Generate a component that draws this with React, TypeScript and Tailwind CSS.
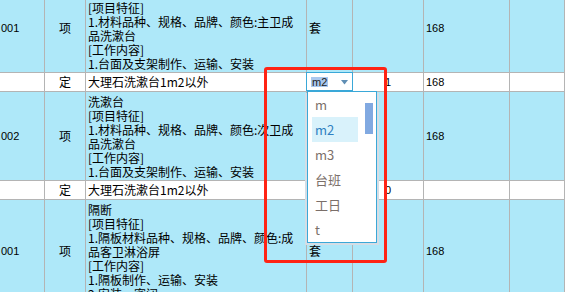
import React from 'react';

type Row = {
  kind: 'item' | 'quota';
  code?: string;
  type: string;
  lines: string[];
  unit?: string;
  qty?: string;
  price?: string;
  combo?: boolean;
};

const rows: Row[] = [
  {
    kind: 'item',
    code: '001',
    type: '项',
    lines: ['洗漱台', '[项目特征]', '1.材料品种、规格、品牌、颜色:主卫成', '品洗漱台', '[工作内容]', '1.台面及支架制作、运输、安装'],
    unit: '套',
    price: '168',
  },
  { kind: 'quota', type: '定', lines: ['大理石洗漱台1m2以外'], qty: '1', price: '168', combo: true },
  {
    kind: 'item',
    code: '002',
    type: '项',
    lines: ['洗漱台', '[项目特征]', '1.材料品种、规格、品牌、颜色:次卫成', '品洗漱台', '[工作内容]', '1.台面及支架制作、运输、安装'],
    unit: '套',
    price: '168',
  },
  { kind: 'quota', type: '定', lines: ['大理石洗漱台1m2以外'], qty: '0' },
  {
    kind: 'item',
    code: '001',
    type: '项',
    lines: ['隔断', '[项目特征]', '1.隔板材料品种、规格、品牌、颜色:成', '品客卫淋浴屏', '[工作内容]', '1.隔板制作、运输、安装', '2.安装、密闭'],
    unit: '套',
    price: '168',
  },
];

const units = ['m', 'm2', 'm3', '台班', '工日', 't'];

const cell = 'border-r border-b border-[#b4b4b4] flex items-center';
const num = "font-['Liberation_Sans',sans-serif] text-[11px]";

/* ── Unit combo with open list ─────────────────────────── */
function UnitCombo() {
  return (
    <>
      <div className="absolute -left-px -top-px z-20 flex h-[19px] w-[47px] items-center border border-[#3aa8d8] bg-white">
        <span className={`ml-[4px] mt-[1px] bg-[#a9c8ef] px-px leading-[10px] text-[#222] ${num}`}>m2</span>
        <svg className="ml-[13px] mt-[1px]" width="7" height="5" viewBox="0 0 7 5">
          <path d="M0 0 H7 L3.5 4.5 Z" fill="#5f8eb4" />
        </svg>
      </div>
      <div className="absolute left-0 top-[18px] z-10 h-[152px] w-[70px] border border-[#3aa8d8] bg-white shadow-[2px_2px_0_0_#d5dde5,-2px_2px_0_0_#d5dde5]">
        {units.map((u) =>
          u === 'm2' ? (
            <div key={u} className="ml-[4px] flex h-[25px] w-[46px] items-center bg-[#d9f2fb] pl-[3px] text-[13px] text-[#2f7fc1]">
              {u}
            </div>
          ) : (
            <div key={u} className="ml-[4px] flex h-[25px] items-center pl-[3px] text-[13px] text-[#7b6f69]">
              {u}
            </div>
          ),
        )}
        <div className="absolute left-[57px] top-[11px] h-[31px] w-[8px] bg-[#81a9e1]" />
      </div>
    </>
  );
}

function TableRow({ row }: { row: Row }) {
  const bg = row.kind === 'item' ? 'bg-[#aee8f9]' : 'bg-white';
  const isQuota = row.kind === 'quota';
  return (
    <div className={`grid grid-cols-[45px_41px_221px_46px_71px_86px_1fr] ${bg} ${isQuota ? 'h-[19px]' : ''}`}>
      <div className={`${cell} pl-px ${num}`}>{row.code}</div>
      <div className={`${cell} justify-center`}>{row.type}</div>
      <div className={`border-r border-b border-[#b4b4b4] pl-[2px] overflow-hidden ${isQuota ? 'flex items-center' : 'pt-[3px] pb-[1px]'}`}>
        {row.lines.map((l, i) => (
          <div key={i} className="whitespace-nowrap leading-[14px]">
            {l}
          </div>
        ))}
      </div>
      <div className={`${cell} relative pl-[2px]`}>
        {row.unit}
        {row.combo && <UnitCombo />}
      </div>
      <div className={`${cell} justify-center ${num}`}>{row.qty}</div>
      <div className={`${cell} pl-[2px] ${num}`}>{row.price}</div>
      <div className={`${cell}`} />
    </div>
  );
}

export default function App() {
  return (
    <div className="relative h-[292px] w-[565px] overflow-hidden bg-[#aee8f9] font-['Noto_Sans_CJK_SC',sans-serif] text-[12px] text-black">
      <div className="mt-[-16px]">
        {rows.map((r, i) => (
          <TableRow key={i} row={r} />
        ))}
      </div>

      {/* Red annotation frame */}
      <div className="pointer-events-none absolute left-[264px] top-[67px] z-30 h-[196px] w-[123px] rounded-[3px] border-[3px] border-[#ff2314]" />
    </div>
  );
}
